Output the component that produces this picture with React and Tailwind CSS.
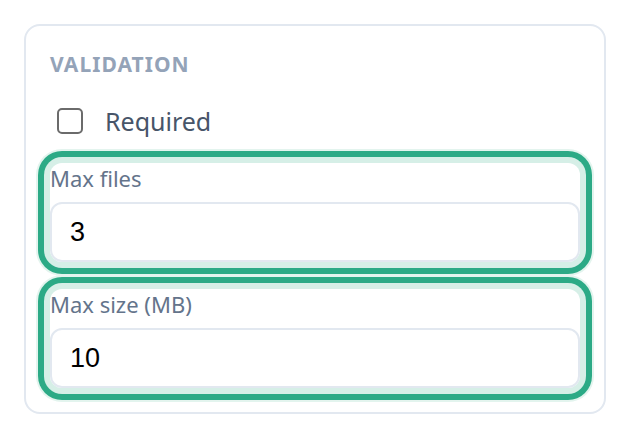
import React, { useState } from "react";

const Field = ({ label, value, onChange }) => (
  <div className="rounded-[12px] bg-white shadow-[0_0_0_6px_#d6efe7,0_0_0_12px_#2caa86,0_0_0_14px_#e3f4ee]">
    <label className="block text-[22px] leading-[30px] text-[#64748b] mb-[9px]">{label}</label>
    <input
      className="block w-full h-[60px] rounded-[12px] border-2 border-[#e2e8f0] bg-white pl-[18px] text-[27px] text-black outline-none"
      style={{ fontFamily: '"Liberation Sans", Arial, sans-serif' }}
      type="number"
      value={value}
      onChange={(e) => onChange(e.target.value)}
    />
  </div>
);

export default function App() {
  const [required, setRequired] = useState(false);
  const [maxFiles, setMaxFiles] = useState("3");
  const [maxSize, setMaxSize] = useState("10");

  return (
    <div className="w-[630px] h-[440px] bg-white pt-6 pl-6" style={{ fontFamily: '"Noto Sans", "Open Sans", sans-serif' }}>
      <div className="w-[582px] rounded-[16px] border-2 border-[#e2e8f0] px-6 pt-6 pb-6">
        <h3 className="text-[21px] leading-[28px] font-bold tracking-[0.05em] text-[#94a3b8]">VALIDATION</h3>

        <label className="mt-[30px] ml-[7px] flex items-center gap-[22px] h-[26px] cursor-pointer">
          <input
            type="checkbox"
            className="appearance-none w-[26px] h-[26px] rounded-[5px] border-2 border-[#6b6b6b] bg-white"
            checked={required}
            onChange={(e) => setRequired(e.target.checked)}
          />
          <span className="text-[25px] leading-[26px] text-[#475569]">Required</span>
        </label>

        <div className="mt-[29px] flex flex-col gap-[27px]">
          <Field label="Max files" value={maxFiles} onChange={setMaxFiles} />
          <Field label="Max size (MB)" value={maxSize} onChange={setMaxSize} />
        </div>
      </div>
    </div>
  );
}
